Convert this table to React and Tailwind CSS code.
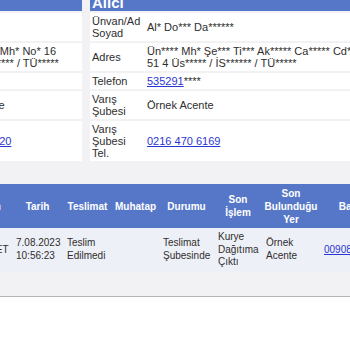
import React from "react";

const Link = ({ children }) => (
  <a href="#" className="text-[#2a36d2] underline">
    {children}
  </a>
);

const InfoPanel = ({ title, width, rows }) => (
  <div className={`${width} shrink-0 flex flex-col gap-[2px]`}>
    <div className="h-[24px] bg-[#5677c8] flex items-end px-[2px] pb-px">
      <span className="text-white font-bold text-[15px] leading-[15px]">{title}</span>
    </div>
    {rows.map((row) => (
      <div key={row.label} className="flex bg-white text-[11px] leading-[12px] text-[#2e2e2e]">
        <div className="w-[55px] shrink-0 px-[2px] py-[2px] flex items-center">{row.label}</div>
        <div className="flex-1 px-[2px] py-[2px] flex items-center">{row.value}</div>
      </div>
    ))}
  </div>
);

const senderRows = [
  { label: "Ünvan/Ad Soyad", value: "Ha*** Yı****" },
  {
    label: "Adres",
    value: "Ke***** Ak** Mh* No* 16 Ke***** / İS***** / TÜ*****",
  },
  { label: "Telefon", value: <span><Link>532445</Link>****</span> },
  { label: "Çıkış Şubesi", value: "Örnek Acente" },
  { label: "Çıkış Şubesi Tel.", value: <Link>0216 470 6120</Link> },
];

const receiverRows = [
  { label: "Ünvan/Ad Soyad", value: "Al* Do*** Da******" },
  {
    label: "Adres",
    value: "Ün**** Mh* Şe*** Ti*** Ak***** Ca***** Cd* 51 4 Üs***** / İS****** / TÜ*****",
  },
  { label: "Telefon", value: <span><Link>535291</Link>****</span> },
  { label: "Varış Şubesi", value: "Örnek Acente" },
  { label: "Varış Şubesi Tel.", value: <Link>0216 470 6169</Link> },
];

const columns = [
  { name: "Birim", w: "w-[48px]" },
  { name: "Tarih", w: "w-[51px]" },
  { name: "Teslimat", w: "w-[49px]" },
  { name: "Muhatap", w: "w-[47px]" },
  { name: "Durumu", w: "w-[55px]" },
  { name: "Son İşlem", w: "w-[48px]" },
  { name: "Son Bulunduğu Yer", w: "w-[58px]" },
  { name: "Barkod", w: "w-[72px]" },
];

const movement = [
  "DEVRET",
  <span>7.08.2023<br />10:56:23</span>,
  "Teslim Edilmedi",
  "",
  "Teslimat Şubesinde",
  "Kurye Dağıtıma Çıktı",
  "Örnek Acente",
  <Link>0090812345678</Link>,
];

export default function App() {
  return (
    <div className="w-[350px] h-[350px] overflow-hidden bg-white font-['Liberation_Sans',Arial,sans-serif]">
      <div className="bg-[#f2f2f4] border-b border-[#b4b4b4] pb-[24px]">
        {/* Gönderici / Alıcı */}
        <div className="flex items-start gap-[8px] -mt-[13px] -ml-[119px]">
          <InfoPanel title="Gönderici" width="w-[201px]" rows={senderRows} />
          <InfoPanel title="Alıcı" width="w-[275px]" rows={receiverRows} />
        </div>

        {/* Hareketler */}
        <div className="mt-[23px] -ml-[36px]">
          <table className="table-fixed w-[428px] border-collapse">
            <thead>
              <tr className="bg-[#5677c8]">
                {columns.map((c) => (
                  <th
                    key={c.name}
                    className={`${c.w} px-[2px] py-[2.5px] text-white font-bold text-[10px] leading-[13px] text-center align-middle`}
                  >
                    {c.name}
                  </th>
                ))}
              </tr>
            </thead>
            <tbody>
              <tr className="bg-[#eef0f7]">
                {movement.map((v, i) => (
                  <td
                    key={i}
                    className="pl-[4px] pr-[2px] py-[3px] text-[10px] leading-[12.5px] text-[#2e2e2e] align-middle"
                  >
                    {v}
                  </td>
                ))}
              </tr>
            </tbody>
          </table>
        </div>
      </div>
    </div>
  );
}
